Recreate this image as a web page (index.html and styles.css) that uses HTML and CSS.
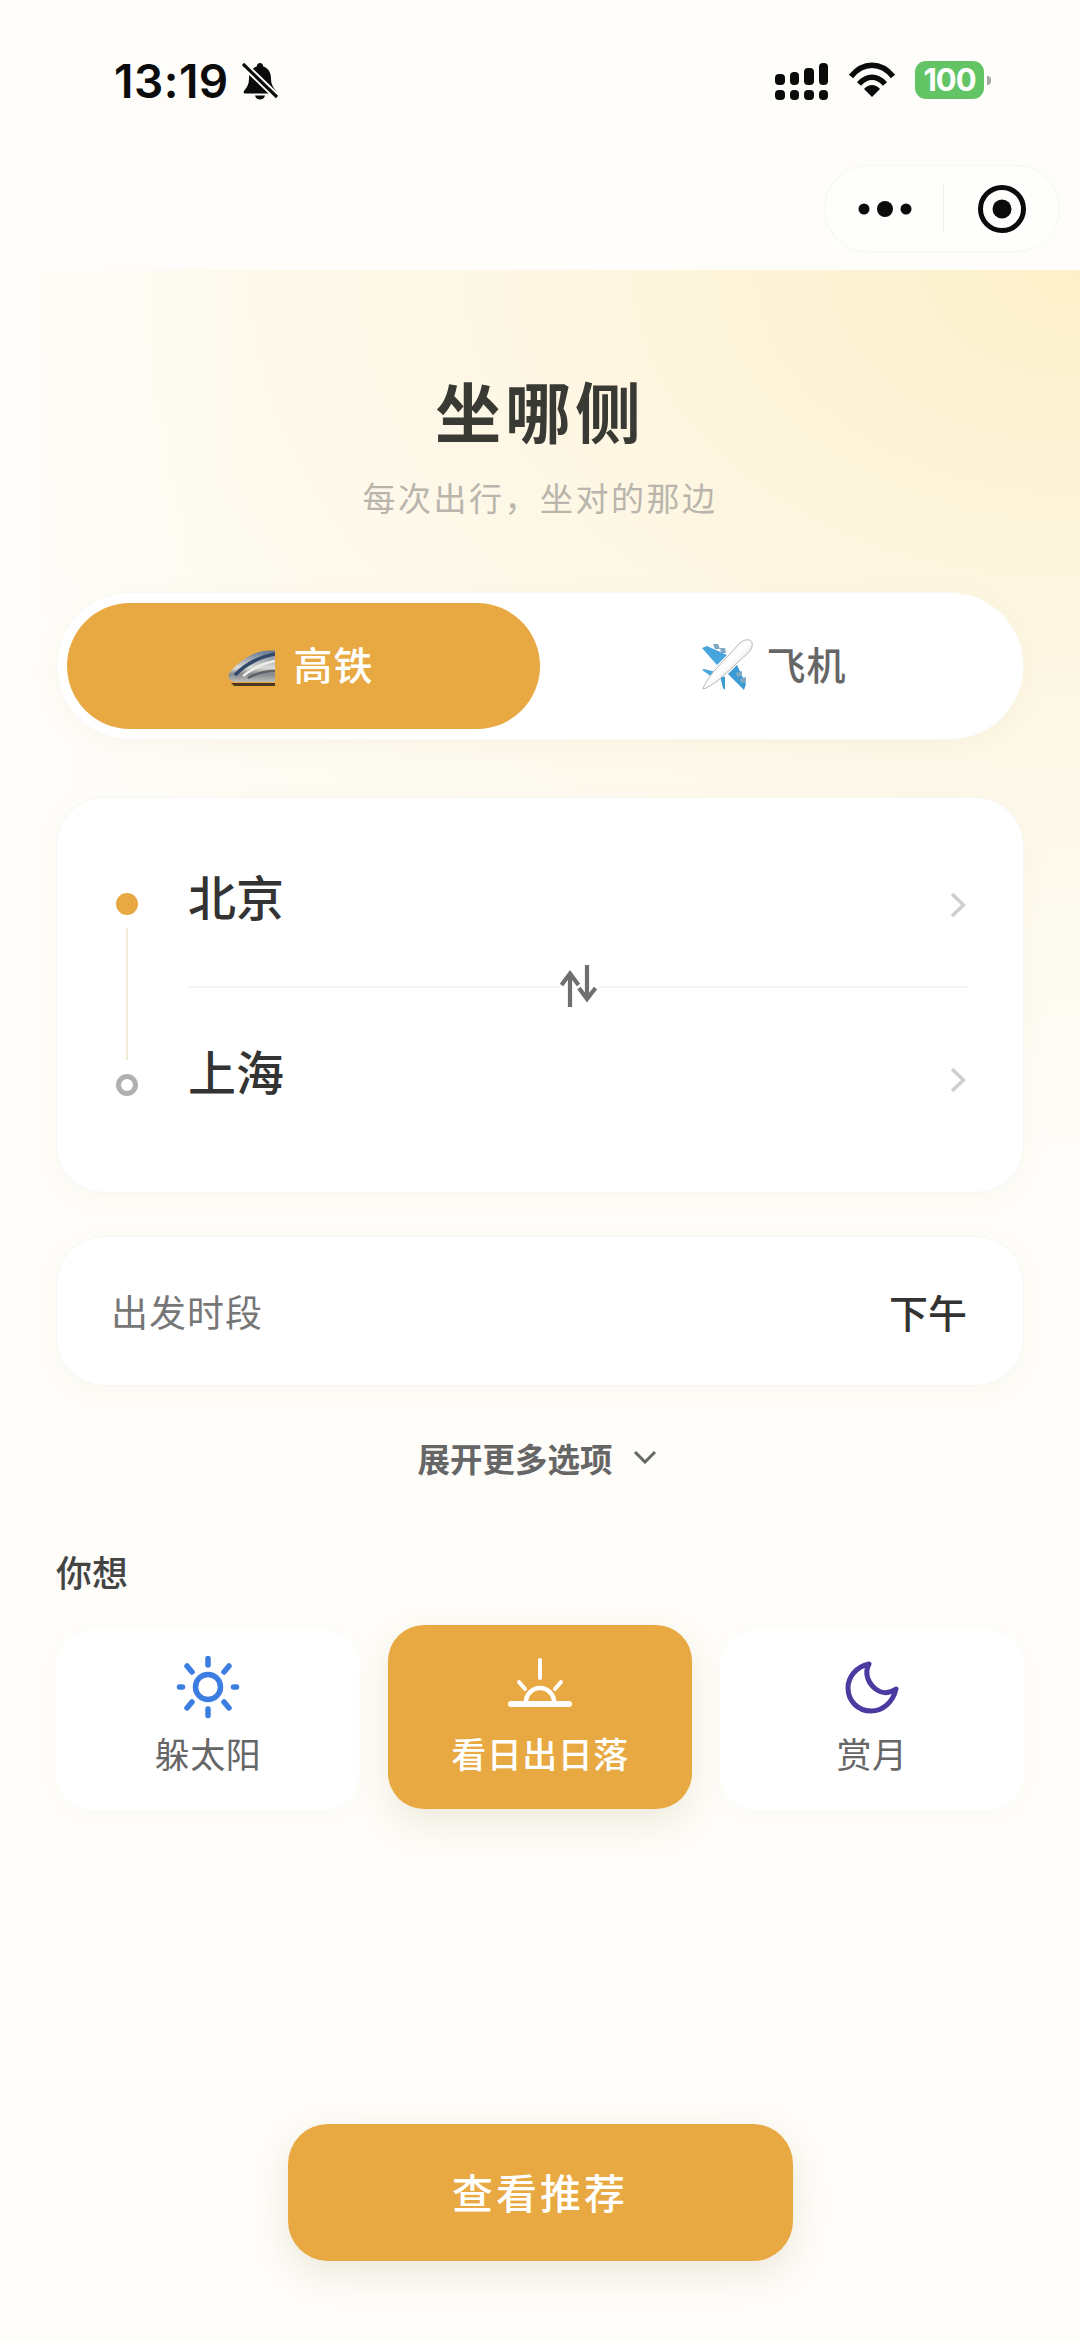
FILE: index.html
```html
<!DOCTYPE html>
<html lang="zh-CN">
<head>
<meta charset="utf-8">
<title>坐哪侧</title>
<link rel="stylesheet" href="styles.css">
</head>
<body>
<div class="page">
  <header class="top">
    <div class="status">
      <div class="status-left">
        <span class="clock">13:19</span>
        <svg class="bell" viewBox="0 0 36 38"><path d="M18 1c2 0 3 1.500 3.300 3.500C27 6.500 29 11 29 17c0 5 2 8 5 12 1 1.500 0 2.500-1.500 2.500h-29C2 31.500 1 30.500 2 29c3-4 5-7 5-12 0-6 2-10.500 7.700-12.500C15 2.500 16 1 18 1z" fill="#0b0b0b"/><path d="M13 33.500h10c-.5 2.500-2.500 4-5 4s-4.500-1.500-5-4z" fill="#0b0b0b"/><path d="M1 2l34 33" stroke="#fefdf9" stroke-width="7"/><path d="M1 2l34 33" stroke="#0b0b0b" stroke-width="3.200"/></svg>
      </div>
      <div class="status-right">
        <div class="signal">
          <div class="sig-col"><i class="b1"></i><i class="dot"></i></div>
          <div class="sig-col"><i class="b2"></i><i class="dot"></i></div>
          <div class="sig-col"><i class="b3"></i><i class="dot"></i></div>
          <div class="sig-col"><i class="b4"></i><i class="dot"></i></div>
        </div>
        <svg class="wifi" viewBox="0 0 48 36"><path d="M3 14.500C15-.5 33-.5 45 14.500" fill="none" stroke="#0b0b0b" stroke-width="5.500"/><path d="M11 22c8-9 18-9 26 0" fill="none" stroke="#0b0b0b" stroke-width="5.500"/><path d="M16 27c5-5.500 11-5.500 16 0l-8 8z" fill="#0b0b0b"/></svg>
        <div class="battery"><span class="batt-body">100</span><i class="batt-nub"></i></div>
      </div>
    </div>
    <div class="navbar">
      <div class="capsule">
        <svg class="cap-more" viewBox="0 0 54 20"><ellipse cx="6" cy="10" rx="5.500" ry="5.500"/><ellipse cx="27" cy="10" rx="8" ry="8"/><ellipse cx="48" cy="10" rx="5.500" ry="5.500"/></svg>
        <i class="cap-sep"></i>
        <svg class="cap-rec" viewBox="0 0 52 52"><circle cx="26" cy="26" r="21.500" fill="none" stroke="#0b0b0b" stroke-width="5"/><circle cx="26" cy="26" r="9.500" fill="#0b0b0b"/></svg>
      </div>
    </div>
  </header>

  <main class="main">
    <h1 class="title">坐哪侧</h1>
    <p class="subtitle">每次出行，坐对的那边</p>

    <div class="tabs">
      <div class="tab tab-on">
        <svg class="ico-train" viewBox="0 0 47 36">
          <defs>
            <linearGradient id="trainG" x1="0" y1="0" x2="0" y2="1"><stop offset="0" stop-color="#5f7696"/><stop offset=".3" stop-color="#a8adb3"/><stop offset=".55" stop-color="#dcdcd8"/><stop offset=".75" stop-color="#85888c"/><stop offset="1" stop-color="#bfbfba"/></linearGradient>
          </defs>
          <path d="M47 0.500C36 0 27 2 18 8 9 14 1 21 .5 26c-.3 3 3 5.500 8 6H47z" fill="url(#trainG)"/>
          <path d="M47 4C36 6 20 12 7 25" fill="none" stroke="#34496a" stroke-width="3.500"/>
          <path d="M47 11C37 13 25 18 15 26" fill="none" stroke="#eeeeea" stroke-width="2.500"/>
          <path d="M47 21c-9 0-18 2-27 7" fill="none" stroke="#5f6266" stroke-width="2.500"/>
          <path d="M3 33h44v3H6z" fill="#4e3820"/>
        </svg>
        <span>高铁</span>
      </div>
      <div class="tab tab-off">
        <svg class="ico-plane" viewBox="0 0 52 52">
          <defs>
            <linearGradient id="planeB" x1="0" y1="0" x2="1" y2="1"><stop offset="0" stop-color="#d9dadc"/><stop offset=".5" stop-color="#ffffff"/><stop offset="1" stop-color="#a9abaf"/></linearGradient>
          </defs>
          <path d="M26 16L6 7 1 9l15 17z" fill="#45a5dc"/>
          <path d="M36 26l9 19-2 6-16-16z" fill="#3b9ad4"/>
          <path d="M15 33L3 30l-2 1 10 7z" fill="#4aa8de"/>
          <path d="M19 37l3 12 2 2 0-13z" fill="#3b9ad4"/>
          <path d="M12 5l5 0 2 5-5 0zM35 34l6-2 0 5-5 1zM39 40l6-2 0 5-5 1zM19 9l5 0 1 5-5 0z" fill="#7fa9c2"/>
          <path d="M50 2c-4-3-9 0-12 3L14 31c-3 3-6 7-11 16l-1 3 3-1c9-5 13-8 16-11l26-24c3-3 6-8 3-12z" fill="url(#planeB)" stroke="#a2a5a9" stroke-width=".8"/>
        </svg>
        <span>飞机</span>
      </div>
    </div>

    <section class="card route">
      <div class="rail">
        <i class="rail-from"></i>
        <i class="rail-line"></i>
        <i class="rail-to"></i>
      </div>
      <div class="cities">
        <div class="city">
          <span>北京</span>
          <svg class="chev" viewBox="0 0 16 24"><path d="M2 1L13.500 12 2 23" fill="none" stroke="#cfcfcf" stroke-width="3.500"/></svg>
        </div>
        <div class="city city-b">
          <span>上海</span>
          <svg class="chev" viewBox="0 0 16 24"><path d="M2 1L13.500 12 2 23" fill="none" stroke="#cfcfcf" stroke-width="3.500"/></svg>
        </div>
        <svg class="swap" viewBox="0 0 38 44"><path d="M10 43V11M1.500 21L10 9.500 18.500 21M27 1v33M19 24L27 35 35.500 24" fill="none" stroke="#6f6f6f" stroke-width="4.200"/></svg>
      </div>
    </section>

    <section class="card timebox">
      <span class="time-label">出发时段</span>
      <span class="time-value">下午</span>
    </section>

    <div class="more">
      <span>展开更多选项</span>
      <svg class="more-chev" viewBox="0 0 24 14"><path d="M2 2l10 10L22 2" fill="none" stroke="#666" stroke-width="3"/></svg>
    </div>

    <h2 class="want">你想</h2>

    <div class="options">
      <div class="opt">
        <svg class="opt-ico" viewBox="0 0 64 64">
          <circle cx="32" cy="32" r="12.500" fill="none" stroke="#3b7de0" stroke-width="5.500"/>
          <path d="M32 3.500v6.500M32 54v6.500M3.500 32h3M57.500 32h3M11 11l5 6M53 11l-5 6M11 53l5-6M53 53l-5-6" fill="none" stroke="#3b7de0" stroke-width="5.500" stroke-linecap="round"/>
        </svg>
        <span>躲太阳</span>
      </div>
      <div class="opt opt-on">
        <svg class="opt-ico" viewBox="0 0 64 64">
          <path d="M18 47a14 14 0 0 1 28 0" fill="none" stroke="#fff" stroke-width="4.500"/>
          <path d="M3 49h58" stroke="#fff" stroke-width="6" stroke-linecap="round"/>
          <path d="M32 5v18M11 27l6 7M53 27l-6 7" stroke="#fff" stroke-width="4" stroke-linecap="round"/>
        </svg>
        <span>看日出日落</span>
      </div>
      <div class="opt">
        <svg class="opt-ico" viewBox="0 0 64 64">
          <path d="M29 9C15 12 8 23 8 33c0 13 10 23 23 23 12 0 22-9 25-22-6 4-13 5-19 1-9-6-13-17-8-26z" fill="none" stroke="#4b3aa0" stroke-width="5" stroke-linejoin="round"/>
        </svg>
        <span>赏月</span>
      </div>
    </div>

    <button class="cta">查看推荐</button>
  </main>
</div>
</body>
</html>
```
FILE: styles.css
```css
* { box-sizing: border-box; }
html, body { margin: 0; padding: 0; }
body {
  font-family: "Noto Sans CJK SC", "Noto Sans", sans-serif;
  background: #fefdf9;
  color: #333;
}
i { display: block; }

.page {
  width: 1080px;
  height: 2341px;
  display: flex;
  flex-direction: column;
  overflow: hidden;
  background: #fefdf9;
}

/* top */
.top { height: 270px; flex: none; display: flex; flex-direction: column; }
.status {
  height: 165px;
  flex: none;
  display: flex;
  justify-content: space-between;
  padding: 61px 89px 0 114px;
}
.status-left { display: flex; align-items: flex-start; gap: 13px; }
.clock {
  font-family: Inter, "Liberation Sans", sans-serif;
  font-weight: 600;
  font-size: 46px;
  line-height: 40px;
  letter-spacing: 0.5px;
  color: #0b0b0b;
}
.bell { width: 36px; height: 38px; margin-top: 1px; }
.status-right { display: flex; align-items: flex-start; }
.signal { display: flex; gap: 5px; width: 54px; height: 38px; margin-top: 1px; }
.sig-col { width: 9.500px; height: 38px; display: flex; flex-direction: column; justify-content: flex-end; gap: 5px; }
.sig-col i { background: #0b0b0b; border-radius: 4px; }
.sig-col .dot { height: 10px; }
.b1 { height: 11px; }
.b2 { height: 13px; }
.b3 { height: 17px; }
.b4 { height: 22px; }
.wifi { width: 48px; height: 36px; margin: 1px 0 0 19px; }
.battery { display: flex; align-items: center; margin-left: 19px; height: 38px; }
.batt-body {
  width: 69px;
  height: 38px;
  border-radius: 11px;
  background: #63c466;
  color: #fff;
  font-family: Inter, "Liberation Sans", sans-serif;
  font-weight: 700;
  font-size: 31px;
  line-height: 38px;
  text-align: center;
  letter-spacing: -1px;
}
.batt-nub { width: 4px; height: 9px; margin-left: 3px; background: #a5a8a5; border-radius: 0 4px 4px 0; }

.navbar { flex: none; display: flex; justify-content: flex-end; padding-right: 20px; }
.capsule {
  width: 236px;
  height: 87px;
  display: flex;
  align-items: center;
  background: #fefefc;
  border: 1px solid #f6f5f1;
  border-radius: 44px;
}
.cap-more { width: 54px; height: 20px; margin-left: 33px; fill: #0b0b0b; }
.cap-sep { width: 1px; height: 50px; margin-left: 31px; background: #f2f2ee; }
.cap-rec { width: 52px; height: 52px; margin-left: 32px; }

/* main */
.main {
  flex: 1;
  display: flex;
  flex-direction: column;
  padding: 99px 56px 80px;
  background:
    linear-gradient(90deg, #fefdf9 0, rgba(254, 253, 249, 0) 22%),
    radial-gradient(ellipse 1300px 900px at 100% 0, #fdf0c9 0, rgba(253, 243, 216, .62) 45%, rgba(254, 253, 249, 0) 100%);
}
.title {
  margin: 0;
  text-align: center;
  font-size: 66px;
  line-height: 80px;
  font-weight: 700;
  letter-spacing: 4px;
  color: #3a3a34;
}
.subtitle {
  margin: 24px 0 0;
  text-align: center;
  font-size: 33px;
  line-height: 48px;
  letter-spacing: 2.500px;
  color: #b9b5ac;
}

.tabs {
  margin-top: 71px;
  height: 148px;
  padding: 10px;
  display: flex;
  background: #fff;
  border: 1px solid #fbf8ef;
  border-radius: 74px;
  box-shadow: 0 6px 24px rgba(190, 165, 110, .07);
}
.tab {
  flex: 1 1 50%;
  display: flex;
  align-items: center;
  justify-content: center;
  gap: 15px;
  border-radius: 63px;
  padding-bottom: 6px;
  font-size: 39px;
  font-weight: 500;
  letter-spacing: 1px;
  color: #666;
}
.tab-on { background: #e8a942; color: #fff; gap: 18px; padding-right: 5px; }
.tab-off { padding-right: 5px; gap: 13px; }
.ico-train { width: 47px; height: 36px; margin-top: 10px; }
.ico-plane { width: 52px; height: 52px; margin-top: 4px; }

.card {
  background: #fff;
  border: 1px solid #f8f6f0;
  box-shadow: 0 6px 24px rgba(190, 165, 110, .06);
}
.route {
  margin-top: 57px;
  height: 396px;
  border-radius: 48px;
  display: flex;
  padding: 95px 54px 0 59px;
}
.rail { width: 22px; flex: none; display: flex; flex-direction: column; align-items: center; }
.rail-from { width: 22px; height: 22px; border-radius: 50%; background: #e8a942; }
.rail-line { width: 2px; height: 132px; margin: 13px 0 14px; background: #f0ead8; }
.rail-to { width: 22px; height: 22px; border-radius: 50%; border: 5.500px solid #b0b0b0; background: #fff; }
.cities {
  flex: 1;
  margin: -79px 0 0 50px;
  position: relative;
  height: 350px;
  display: flex;
  flex-direction: column;
}
.city {
  height: 174px;
  flex: none;
  display: flex;
  align-items: center;
  justify-content: space-between;
  padding-right: 3px;
  font-size: 48px;
  font-weight: 500;
  color: #333;
}
.city > span { position: relative; top: -5px; }
.city { border-bottom: 2px solid #f6f5f1; }
.city-b { border-bottom: 0; }
.chev { width: 16px; height: 24px; position: relative; top: 5px; }
.swap { position: absolute; left: 372px; top: 150px; width: 38px; height: 44px; background: #fff; }

.timebox {
  margin-top: 43px;
  height: 150px;
  flex: none;
  border-radius: 48px;
  display: flex;
  align-items: center;
  justify-content: space-between;
  padding: 0 56px 0 54px;
}
.time-label { font-size: 37px; letter-spacing: 1px; color: #777; }
.time-value { font-size: 39px; font-weight: 500; color: #333; }

.more {
  margin-top: 47px;
  height: 48px;
  flex: none;
  display: flex;
  align-items: center;
  justify-content: center;
  gap: 20px;
  padding-right: 6px;
  font-size: 32.500px;
  font-weight: 700;
  color: #666;
}
.more-chev { width: 24px; height: 14px; }

.want {
  margin: 66px 0 0;
  font-size: 36px;
  line-height: 48px;
  font-weight: 500;
  color: #444;
}

.options {
  margin-top: 30px;
  display: grid;
  grid-template-columns: repeat(3, 304px);
  column-gap: 28px;
  align-items: start;
}
.opt {
  height: 180px;
  margin-top: 5px;
  border-radius: 36px;
  background: #fff;
  box-shadow: 0 4px 20px rgba(190, 165, 110, .03);
  display: flex;
  flex-direction: column;
  align-items: center;
  padding-top: 25px;
  font-size: 35px;
  line-height: 48px;
  letter-spacing: 0.500px;
  color: #666;
}
.opt-ico { width: 64px; height: 64px; margin-bottom: 10px; }
.opt-on {
  height: 184px;
  margin-top: 0;
  padding-top: 30px;
  background: #e8a942;
  color: #fff;
  font-weight: 500;
  box-shadow: 0 14px 36px rgba(150, 120, 60, .14);
}

.cta {
  margin-top: auto;
  align-self: center;
  width: 505px;
  height: 137px;
  flex: none;
  border: 0;
  border-radius: 40px;
  background: #e8a942;
  color: #fff;
  font-family: inherit;
  font-size: 41px;
  font-weight: 500;
  letter-spacing: 3px;
  padding-bottom: 4px;
  box-shadow: 0 12px 36px rgba(150, 120, 60, .16);
}
```
